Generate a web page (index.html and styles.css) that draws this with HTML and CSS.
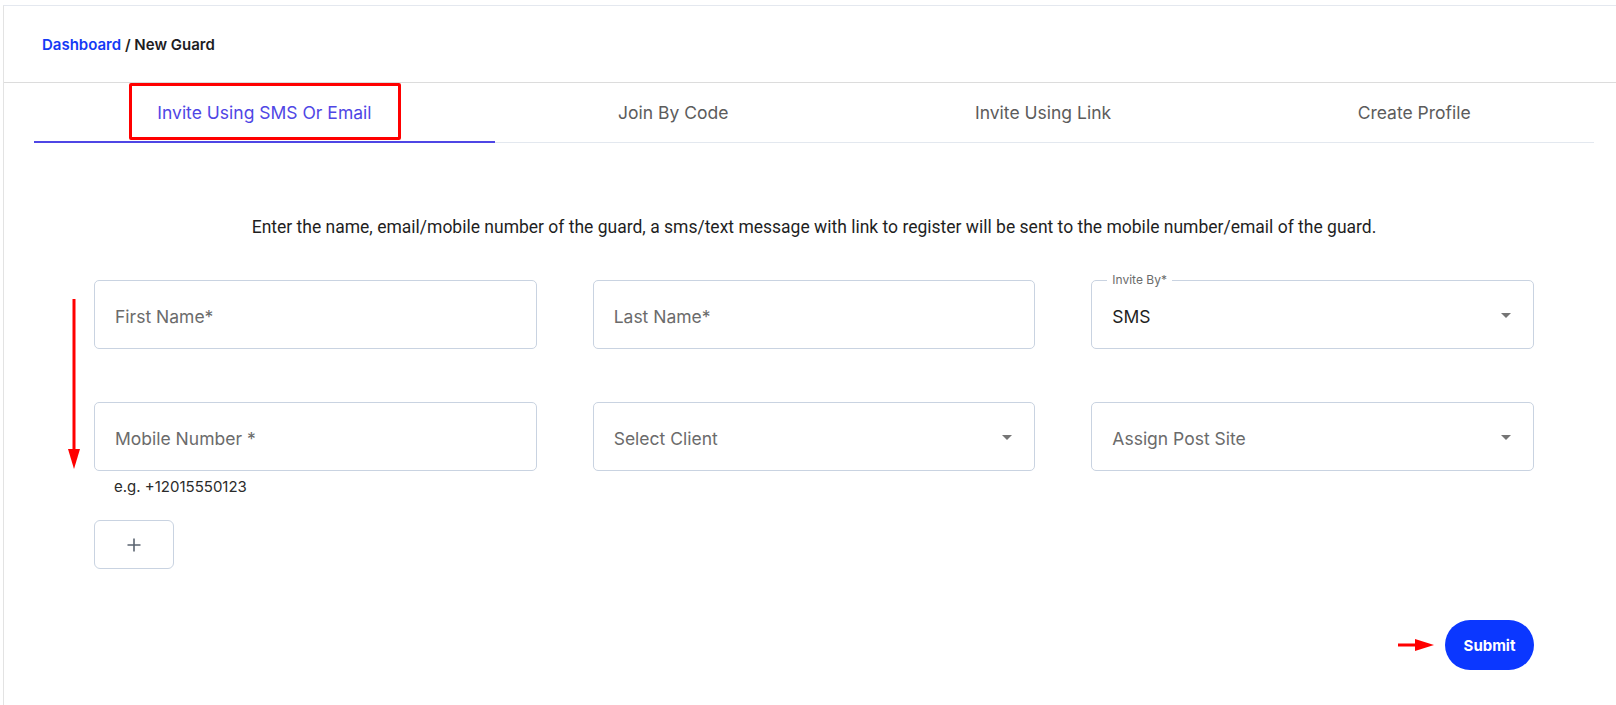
FILE: index.html
```html
<!DOCTYPE html>
<html lang="en">
<head>
  <meta charset="UTF-8">
  <title>New Guard</title>
  <link rel="stylesheet" href="styles.css">
</head>
<body>
  <div class="page">
    <div class="header">
      <div class="crumbs"><a href="#" class="crumb-link">Dashboard</a> / <span class="crumb-current">New Guard</span></div>
    </div>

    <div class="tabs">
      <div class="tab active">
        <span class="mark"></span>
        Invite Using SMS Or Email
      </div>
      <div class="tab">Join By Code</div>
      <div class="tab">Invite Using Link</div>
      <div class="tab">Create Profile</div>
    </div>

    <div class="form">
      <svg class="arrow-down" width="14" height="172" viewBox="0 0 14 172">
        <rect x="5.5" y="0" width="3" height="154" fill="#ff0000"/>
        <polygon points="1,150 13,150 7,170" fill="#ff0000"/>
      </svg>

      <p class="intro">Enter the name, email/mobile number of the guard, a sms/text message with link to register will be sent to the mobile number/email of the guard.</p>

      <div class="grid">
        <div class="cell">
          <div class="field"><span class="placeholder">First Name*</span></div>
        </div>
        <div class="cell">
          <div class="field"><span class="placeholder">Last Name*</span></div>
        </div>
        <div class="cell">
          <div class="field select">
            <span class="float-label">Invite By*</span>
            <span class="value">SMS</span>
            <svg class="caret" width="24" height="24" viewBox="0 0 24 24"><path d="M7 10l5 5 5-5z"/></svg>
          </div>
        </div>
        <div class="cell">
          <div class="field"><span class="placeholder">Mobile Number *</span></div>
          <div class="helper">e.g. +12015550123</div>
        </div>
        <div class="cell">
          <div class="field select">
            <span class="placeholder">Select Client</span>
            <svg class="caret" width="24" height="24" viewBox="0 0 24 24"><path d="M7 10l5 5 5-5z"/></svg>
          </div>
        </div>
        <div class="cell">
          <div class="field select">
            <span class="placeholder">Assign Post Site</span>
            <svg class="caret" width="24" height="24" viewBox="0 0 24 24"><path d="M7 10l5 5 5-5z"/></svg>
          </div>
        </div>
      </div>

      <button class="add-btn" type="button">
        <svg width="16" height="16" viewBox="0 0 16 16"><path d="M8 1.5v13M1.5 8h13" stroke="#5b6470" stroke-width="1.6" fill="none"/></svg>
      </button>

      <div class="actions">
        <svg class="arrow-right" width="37" height="14" viewBox="0 0 37 14">
          <rect x="0" y="5.5" width="20" height="3" fill="#ff0000"/>
          <polygon points="17,1 36,7 17,13" fill="#ff0000"/>
        </svg>
        <button class="submit" type="button">Submit</button>
      </div>
    </div>
  </div>
</body>
</html>
```

FILE: styles.css
```css
*{
  box-sizing: border-box;
}
body{
  margin: 5px 0 0 3px;
  background: #fff;
  font-family: Inter, "Noto Sans", sans-serif;
  color: #222;
}
.page{
  min-height: 700px;
  border-top: 1px solid #e4e8ef;
  border-left: 1px solid #e3e3e3;
  background: #fff;
}

/* breadcrumb bar */
.header{
  height: 77px;
  display: flex;
  align-items: center;
  padding-left: 38px;
  border-bottom: 1px solid #dcdcdc;
}
.crumbs{
  font-size: 15px;
  font-weight: 600;
  color: #222;
}
.crumb-link{
  color: #1439f5;
  text-decoration: none;
}
.crumb-current{
  color: #1d1d1f;
}

/* tabs */
.tabs{
  display: flex;
  margin: 0 22px 0 30px;
  border-bottom: 1px solid #e3e8ef;
}
.tab{
  flex: 1 1 auto;
  height: 59px;
  display: flex;
  align-items: center;
  justify-content: center;
  font-size: 17.5px;
  color: #5c5c5c;
  position: relative;
}
.tab.active{
  color: #4f46e5;
}
.tab.active::after{
  content: '';
  position: absolute;
  left: 0;
  right: 0;
  bottom: -1px;
  height: 2px;
  background: #4f46e5;
}
.mark{
  position: absolute;
  top: 0;
  left: 50%;
  width: 272px;
  height: 57px;
  margin-left: -135px;
  border: 3px solid #ff0000;
  border-radius: 2px;
}

/* form */
.form{
  position: relative;
  width: 1440px;
  margin-left: 90px;
  padding-top: 72px;
}
.arrow-down{
  position: absolute;
  left: -27px;
  top: 156px;
}
.intro{
  margin: 0;
  text-align: center;
  font-family: Roboto, sans-serif;
  font-size: 17.5px;
  line-height: 24px;
  color: #1f1f1f;
}
.grid{
  display: grid;
  grid-template-columns: repeat(3, 1fr);
  column-gap: 56px;
  row-gap: 53px;
  margin-top: 41px;
}
.field{
  position: relative;
  height: 69px;
  border: 1px solid #c9d3e1;
  border-radius: 5px;
  display: flex;
  align-items: center;
  padding: 3px 20px 0;
  font-size: 17.5px;
}
.placeholder{
  color: #6b6b6b;
}
.value{
  color: #1f1f1f;
}
.float-label{
  position: absolute;
  top: -8px;
  left: 15px;
  padding: 0 5px;
  background: #fff;
  font-size: 12px;
  line-height: 14px;
  color: #6b6b6b;
}
.caret{
  position: absolute;
  right: 15px;
  top: 50%;
  margin-top: -12px;
  fill: #757575;
}
.helper{
  margin-top: 6px;
  padding-left: 20px;
  font-size: 15px;
  line-height: 20px;
  color: #2b2b2b;
}
.add-btn{
  display: flex;
  align-items: center;
  justify-content: center;
  width: 80px;
  height: 49px;
  margin-top: 23px;
  background: #fff;
  border: 1px solid #c9d3e1;
  border-radius: 6px;
  cursor: pointer;
}
.actions{
  display: flex;
  justify-content: flex-end;
  align-items: center;
  gap: 10px;
  margin-top: 51px;
}
.submit{
  width: 89px;
  height: 50px;
  border: none;
  border-radius: 25px;
  background: #0b37ff;
  color: #fff;
  font-family: Inter, sans-serif;
  font-size: 15px;
  font-weight: 700;
  cursor: pointer;
}
```
